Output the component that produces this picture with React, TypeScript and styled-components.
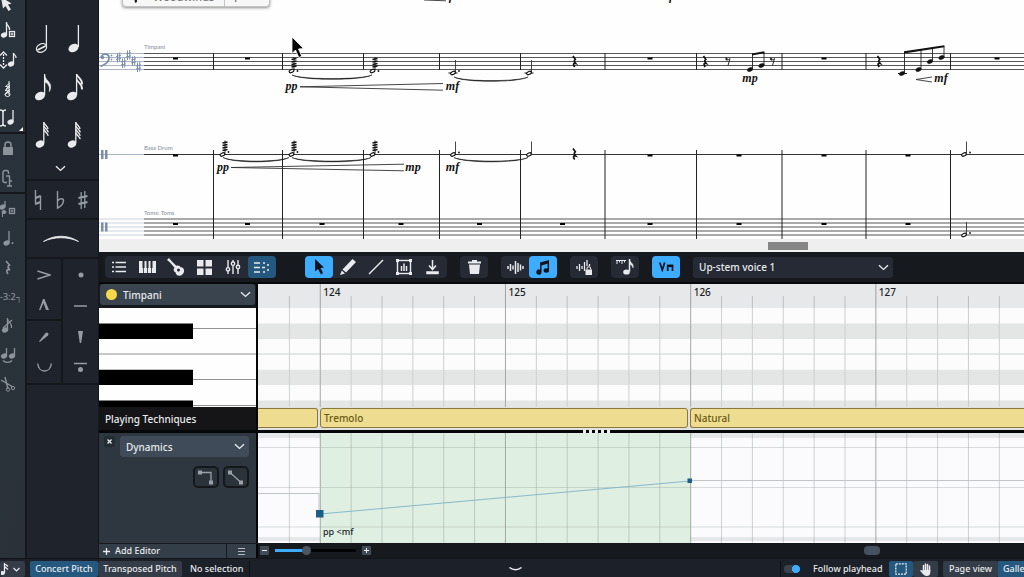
import React from "react";
import styled, { createGlobalStyle, css } from "styled-components";

const c = {
  rail: "#29313a",
  panel: "#1f232b",
  edge: "#14171c",
  bar: "#16191e",
  group: "#252a35",
  select: "#3a444f",
  accent: "#3eadff",
  deep: "#25587f",
  text: "#e8eaed",
  dim: "#8d939b",
  side: "#2e373f",
  faded: "#7b8ea8",
};

const Global = createGlobalStyle`
  *, *::before, *::after { box-sizing: border-box; }
  body { margin: 0; background: #16191e; overflow: hidden; }
  button, select, input { font: inherit; color: inherit; margin: 0; }
  button { border: 0; padding: 0; background: none; }
  svg { display: block; }
`;

const Shell = styled.div`
  height: 100vh;
  display: flex;
  flex-direction: column;
  font: 500 10px/14px "Noto Sans", "Open Sans", sans-serif;
  color: ${c.text};
  background: ${c.bar};
`;
const Workspace = styled.div`
  flex: 1;
  min-height: 0;
  display: flex;
`;

/* ---------- left tool rail ---------- */
const Rail = styled.nav`
  width: 27px;
  flex: none;
  overflow: hidden;
  background: linear-gradient(100deg, #29333b, #2a3139);
  border-right: 2px solid ${c.edge};
`;
const RailSection = styled.div<{ $top?: number }>`
  position: relative;
  padding-top: ${(p) => p.$top ?? 0}px;
  border-bottom: 2px solid ${c.edge};
  &:last-child { border-bottom: 0; }
`;
const RailButton = styled.button<{ $h?: number; $dim?: boolean }>`
  display: flex;
  align-items: center;
  width: 25px;
  height: ${(p) => p.$h ?? 29}px;
  color: ${(p) => (p.$dim ? c.dim : c.text)};
  font-size: 9px;
  white-space: nowrap;
`;
const Corner = styled.i`
  position: absolute;
  right: 2px;
  bottom: 1px;
  border: 2px solid transparent;
  border-right-color: #fff;
  border-bottom-color: #fff;
`;

/* ---------- notation palette ---------- */
const Palette = styled.aside`
  width: 72px;
  flex: none;
  background: ${c.panel};
  border-right: 1px solid ${c.edge};
`;
const NoteGrid = styled.div`
  display: grid;
  grid-template-columns: repeat(2, 32px);
  grid-auto-rows: 48px;
  padding-top: 14px;
`;
const PaletteButton = styled.button<{ $dim?: boolean; $line?: boolean }>`
  display: grid;
  place-items: center;
  color: ${(p) => (p.$dim ? "#969ca4" : c.text)};
  ${(p) => p.$line && css`border-bottom: 2px solid ${c.edge};`}
`;
const PaletteRow = styled.div<{ $h: number }>`
  display: flex;
  height: ${(p) => p.$h}px;
  padding: 0 4px 0 0;
  border-bottom: 2px solid ${c.edge};
  & > button { flex: 1; }
`;
const Articulations = styled.div`
  display: grid;
  grid-template-columns: 36px 1fr;
  grid-auto-rows: 31px;
  border-bottom: 2px solid ${c.edge};
  & > button:nth-child(odd) { border-right: 2px solid ${c.edge}; }
`;

/* ---------- main column ---------- */
const Main = styled.main`
  flex: 1;
  min-width: 0;
  display: flex;
  flex-direction: column;
`;
const ScoreView = styled.section`
  position: relative;
  flex: 1;
  min-height: 0;
  display: flex;
  flex-direction: column;
  background: #fff;
`;
const ScoreCanvas = styled.div`
  flex: 1;
  min-height: 0;
  overflow: hidden;
  background: #fefefe;
`;
const ScoreScroll = styled.div`
  height: 13px;
  padding: 3px 0 0;
  background: #efefef;
  display: flex;
  justify-content: flex-end;
`;
const ScoreThumb = styled.div`
  width: 40px;
  height: 8px;
  margin-right: 216px;
  background: #868686;
`;
const FlowTab = styled.div`
  position: absolute;
  left: 23px;
  top: -13px;
  width: 148px;
  height: 20px;
  display: flex;
  background: #f7f7f7;
  border: 1px solid #c4c4c4;
  border-radius: 4px;
  box-shadow: 0 1px 3px rgba(0, 0, 0, 0.45);
  color: #777;
  font-size: 11px;
  line-height: 20px;
`;
const FlowName = styled.span`
  display: flex;
  align-items: center;
  gap: 15px;
  width: 102px;
  padding-left: 10px;
  border-right: 1px solid #c4c4c4;
`;
const FlowNext = styled.span`
  padding-left: 9px;
`;

/* ---------- toolbar ---------- */
const Toolbar = styled.div`
  display: flex;
  align-items: center;
  gap: 13px;
  height: 32px;
  padding: 0 6px;
  background: ${c.bar};
  border-bottom: 2px solid #06080a;
`;
const Group = styled.div<{ $w: number; $after?: number }>`
  display: flex;
  width: ${(p) => p.$w}px;
  height: 22px;
  flex: none;
  border-radius: 4px;
  background: ${c.group};
  margin-right: ${(p) => p.$after ?? 0}px;
`;
const Tool = styled.button<{ $tone?: "deep" | "accent" }>`
  flex: 1;
  display: grid;
  place-items: center;
  border-radius: 4px;
  color: ${(p) => (p.$tone === "accent" ? "#10141a" : c.text)};
  background: ${(p) => (p.$tone === "accent" ? c.accent : p.$tone === "deep" ? c.deep : "none")};
`;
const SelectBox = styled.label<{ $bg: string; $w?: number }>`
  display: grid;
  grid-template-columns: 1fr auto;
  align-items: center;
  flex: ${(p) => (p.$w ? "none" : 1)};
  width: ${(p) => (p.$w ? p.$w + "px" : "auto")};
  height: 21px;
  border-radius: 3px;
  background: ${(p) => p.$bg};
  & > svg { grid-area: 1 / 2; margin-right: 4px; pointer-events: none; }
`;
const Select = styled.select<{ $indent: number }>`
  grid-area: 1 / 1 / 2 / 3;
  width: 100%;
  height: 100%;
  appearance: none;
  border: 0;
  background: none;
  padding: 0 18px 0 ${(p) => p.$indent}px;
  outline: 0;
`;
const Swatch = styled.i`
  grid-area: 1 / 1;
  width: 11px;
  height: 11px;
  margin-left: 6px;
  border-radius: 50%;
  background: #f6d84a;
  pointer-events: none;
`;

/* ---------- lower zone ---------- */
const Row = styled.div<{ $h: number }>`
  display: grid;
  grid-template-columns: 159px minmax(0, 1fr);
  height: ${(p) => p.$h}px;
  flex: none;
`;
const SideCell = styled.div<{ $bg?: string }>`
  display: flex;
  flex-direction: column;
  background: ${(p) => p.$bg ?? c.bar};
  border-right: 2px solid #050607;
  min-height: 0;
`;
const TrackCell = styled(SideCell)`
  flex-direction: row;
  align-items: flex-start;
  padding: 0 1px 0 1px;
`;
const RollCell = styled.div`
  overflow: hidden;
  background: #fbfcfb;
`;
const TechniqueTitle = styled(SideCell)`
  padding: 5px 6px;
  background: #151518;
`;
const TechniqueLane = styled.div`
  display: flex;
  gap: 2px;
  padding: 1px 0 2px;
  background: #dfe2e1;
  overflow: hidden;
`;
const Technique = styled.div<{ $w?: number; $open?: "left" | "right" }>`
  flex: ${(p) => (p.$w ? "none" : 1)};
  width: ${(p) => (p.$w ? p.$w + "px" : "auto")};
  padding: 2px 3px;
  border: 1px solid #8b793b;
  border-radius: 3px;
  ${(p) => p.$open === "left" && css`border-left: 0; border-radius: 0 3px 3px 0;`}
  ${(p) => p.$open === "right" && css`border-right: 0; border-radius: 3px 0 0 3px;`}
  background: #eedd90;
  color: #6b5a17;
`;
const Splitter = styled.div`
  display: flex;
  justify-content: center;
  gap: 3px;
  height: 3px;
  padding-left: 70px;
  background: #050607;
  & > i { width: 3px; height: 3px; background: #eee; }
`;
const LaneHead = styled.div`
  display: flex;
  align-items: flex-start;
  gap: 5px;
  padding: 3px 7px 0 5px;
`;
const CloseButton = styled.button`
  width: 11px;
  height: 11px;
  border-radius: 2px;
  display: grid;
  place-items: center;
  background: #242c33;
`;
const LaneTools = styled.div`
  display: flex;
  justify-content: flex-end;
  gap: 4px;
  padding: 9px 7px;
`;
const LaneButton = styled.button`
  width: 26px;
  height: 22px;
  display: grid;
  place-items: center;
  border: 2px solid #14181c;
  border-radius: 5px;
  background: #2a323a;
  color: #9aa0a7;
`;
const AddRow = styled.div`
  display: flex;
  gap: 1px;
  height: 14px;
  margin-top: 1px;
  line-height: 14px;
  border-right: 2px solid #050607;
`;
const AddButton = styled.button`
  flex: 1;
  display: flex;
  align-items: center;
  gap: 5px;
  padding-left: 4px;
  background: #343e48;
  font-size: 9px;
`;
const MenuButton = styled.button`
  width: 29px;
  display: grid;
  place-items: center;
  background: #343e48;
  color: #b4b9bf;
`;
const ZoomBar = styled.div`
  display: flex;
  align-items: center;
  gap: 6px;
  padding-left: 2px;
`;
const ZoomButton = styled.button`
  width: 9px;
  height: 9px;
  border-radius: 1px;
  display: grid;
  place-items: center;
  background: #414b56;
`;
const ZoomSlider = styled.input`
  appearance: none;
  width: 81px;
  height: 9px;
  background: linear-gradient(90deg, ${c.accent} 38%, #020304 38%) center / 100% 3px no-repeat;
  &::-webkit-slider-thumb {
    appearance: none;
    width: 9px;
    height: 9px;
    border-radius: 50%;
    background: #4e5660;
  }
`;
const RollThumb = styled.div`
  width: 16px;
  height: 9px;
  margin: 0 144px 0 auto;
  border-radius: 4px;
  background: #455060;
`;

/* ---------- status bar ---------- */
const Status = styled.footer`
  display: flex;
  height: 19px;
  flex: none;
  padding-top: 2px;
  background: #1c2028;
  border-top: 1px solid #101317;
  font-size: 9px;
  line-height: 16px;
`;
const Mode = styled.button<{ $on?: boolean; $w: number }>`
  width: ${(p) => p.$w}px;
  flex: none;
  display: flex;
  align-items: center;
  justify-content: center;
  white-space: nowrap;
  border-radius: 2px;
  background: ${(p) => (p.$on ? c.deep : "#343c47")};
`;
const ClippedMode = styled(Mode)`
  justify-content: flex-start;
  padding-left: 5px;
  overflow: hidden;
  border-radius: 0;
`;
const StatusText = styled.span`
  width: 68px;
  padding-left: 8px;
  border-right: 1px solid #0e1114;
`;
const Expand = styled.button`
  flex: 1;
  display: grid;
  place-items: center;
`;
const StatusPart = styled.div<{ $ml?: number }>`
  display: flex;
  margin-left: ${(p) => p.$ml ?? 0}px;
`;
const Follow = styled.label`
  display: flex;
  align-items: center;
  gap: 13px;
  width: 109px;
  padding-left: 3px;
  border-left: 1px solid #0e1114;
  white-space: nowrap;
`;
const Switch = styled.input`
  appearance: none;
  flex: none;
  width: 16px;
  height: 8px;
  border-radius: 4px;
  background: radial-gradient(circle at 12px 4px, ${c.accent} 4px, #39424d 4px);
`;

/* ---------- icons ---------- */
type IcoProps = { w: number; h: number; children: React.ReactNode; sw?: number };
const Ico = ({ w, h, children, sw = 1 }: IcoProps) => (
  <svg width={w} height={h} viewBox={`0 0 ${w} ${h}`} fill="none" stroke="currentColor" strokeWidth={sw} aria-hidden="true">
    {children}
  </svg>
);
const Chevron = () => (
  <Ico w={11} h={7} sw={1.4}><path d="M1 1.2 5.5 5.4 10 1.2" /></Ico>
);
const PaletteNote = ({ flags = 0, open }: { flags?: number; open?: boolean }) => {
  const small = flags > 2;
  const hx = flags ? 13 : 14.5;
  const sx = small ? 16.8 : flags ? 17.6 : 19.4;
  return (
    <Ico w={32} h={36}>
      <ellipse cx={hx} cy={28} rx={small ? 4.4 : 5.3} ry={small ? 3.4 : 4} transform={`rotate(-28 ${hx} 28)`} fill={open ? "none" : "currentColor"} stroke={open ? "currentColor" : "none"} strokeWidth={1.3} />
      {open && <path d={`M${hx - 4} 30 L${hx + 4} 26`} strokeWidth={1.8} />}
      <path d={`M${sx} 27V${flags ? 6 : 5}`} strokeWidth={1.3} />
      {flags === 1 && <path d={`M${sx} 7c.5 5 6.5 7 6 12 0 1.5-.4 3-1.3 4.5 1-6-1.8-8.500-4.700-9.500z`} fill="currentColor" strokeWidth={0.7} />}
      {flags > 1 &&
        Array.from({ length: flags }, (_, i) => (
          <path key={i} d={`M${sx} ${6.5 + i * (small ? 3.4 : 5)}c1 3 ${small ? "4.5 4 4.2" : "6 4.5 5.5"} ${small ? 6.5 : 10}`} strokeWidth={small ? 1.4 : 1.8} />
        ))}
    </Ico>
  );
};
const MiniNote = ({ x, y, up = 12 }: { x: number; y: number; up?: number }) => (
  <>
    <ellipse cx={x} cy={y} rx={3.2} ry={2.5} transform={`rotate(-25 ${x} ${y})`} fill="currentColor" stroke="none" />
    <path d={`M${x + 2.5} ${y}v${-up}`} strokeWidth={1.3} />
  </>
);

const railIcons = {
  pointer: <Ico w={25} h={16}><path d="M1 -3 11.500 3.500 8 4.500 11 9.500 8.500 11 5.500 6 3 8.500z" fill="currentColor" stroke="none" /></Ico>,
  addNote: <Ico w={25} h={20}><MiniNote x={4} y={14} up={13} /><path d="M6.500 2c.5 3 3.500 3 3 7" strokeWidth={1.300} /><rect x="9.500" y="10.500" width="5" height="5" strokeWidth={1.300} /><path d="M12 11.500v3M10.500 13h3" /></Ico>,
  pitch: <Ico w={25} h={20}><path d="M3.500 4v12" strokeDasharray="2 1" strokeWidth={1.300} /><path d="M0 5.500 3.500 2 7 5.500M0 14.500 3.500 18 7 14.500" strokeWidth={1.300} /><MiniNote x={11} y={14} up={11} /><path d="M13.500 3c0 2 3 2 2.500 5" strokeWidth={1.300} /></Ico>,
  roll: <Ico w={25} h={20}><path d="M9 2v14M10 4 5.500 7.500 10 8 5 11.500l5 .5-5 3.500M10 6 6 10M10 10l-4 4" /><ellipse cx="7.500" cy="15.500" rx="2.500" ry="2" /></Ico>,
  insert: <Ico w={25} h={20}><path d="M0 2c2 0 3 .5 3 2v12c0 1.500-1 2-3 2M6 2c-2 0-3 .5-3 2M6 18c-2 0-3-.5-3-2" strokeWidth={1.500} /><MiniNote x={10.500} y={14} /></Ico>,
  lock: <Ico w={25} h={16}><rect x="3" y="6" width="10" height="8" rx="0.500" fill="currentColor" stroke="none" /><path d="M5 7V4a3 3 0 0 1 6 0V7" strokeWidth={1.500} /></Ico>,
  clip: <Ico w={25} h={20}><path d="M8.500 6V4.500a2 2 0 0 0-2-2H5a2 2 0 0 0-2 2v8a2 2 0 0 0 2 2h2M9.500 8v10M6 8h4M7 18h5M9 13h3" strokeWidth={1.400} /></Ico>,
  graceAdd: <Ico w={25} h={20}><MiniNote x={2.500} y={7} up={6} /><path d="M2.500 11v6" /><ellipse cx="4" cy="12" rx="2" ry="1.500" fill="currentColor" /><rect x="9.500" y="8.500" width="5" height="5" strokeWidth={1.300} /><path d="M12 9.500v3M10.500 11h3" /></Ico>,
  dotted: <Ico w={25} h={20}><MiniNote x={6.500} y={14} up={12} /><circle cx="12.500" cy="14" r="1" fill="currentColor" stroke="none" /></Ico>,
  rest: <Ico w={25} h={20}><path d="M6 3l3.500 4c-2 1.500-2 2.500.5 5-3-1-4.500 1-2 4" strokeWidth={1.700} /></Ico>,
  grace: <Ico w={25} h={20}><MiniNote x={5} y={14} /><path d="M7.500 3c.5 3 5 4 4 9M3 12l9-8" strokeWidth={1.200} /></Ico>,
  tie: <Ico w={25} h={20}><MiniNote x={4} y={11} up={8} /><MiniNote x={12} y={11} up={8} /><path d="M3 15.500c2 2.500 7 2.500 9 0" strokeWidth={1.300} /></Ico>,
  cut: <Ico w={25} h={20}><path d="M1 6l12 7M5 3l3 12" strokeWidth={1.400} /><circle cx="8" cy="15.500" r="1.700" /><circle cx="13" cy="14" r="1.700" /></Ico>,
};

const toolIcons = {
  list: <Ico w={16} h={14} sw={1.5}><path d="M4.500 2.500H15M4.500 7H15M4.500 11.500H15M1 2.500h2M1 7h2M1 11.500h2" /></Ico>,
  piano: <Ico w={17} h={14}><path d="M0 1h17v12H0z" fill="currentColor" stroke="none" /><path d="M4.500 1v7M8.500 1v7M12.500 1v7" stroke={c.group} strokeWidth={2} /><path d="M4.500 8v5M8.500 8v5M12.500 8v5" stroke={c.group} strokeWidth={0.800} /></Ico>,
  guitar: <Ico w={20} h={20}><path d="M1 3 3 1l2.500 3 4.800 4.800c2-.8 3.700 0 4.200 1.500 2.500 0 4 2 3.500 4.500-.5 2-2 3.500-4 4-2.500.3-4.500-1.500-4.500-3.500-2-.5-2.500-2.800-1-4.500L4 5.500z" fill="currentColor" stroke="none" /><circle cx="12.500" cy="13" r="1.500" fill={c.group} stroke="none" /></Ico>,
  grid: <Ico w={15} h={15}><path d="M0 0h6.500v6.500H0zM8.500 0H15v6.500H8.500zM0 8.500h6.500V15H0zM8.500 8.500H15V15H8.500z" fill="currentColor" stroke="none" /></Ico>,
  mixer: <Ico w={16} h={16} sw={1.4}><path d="M3 1v7.500M3 12v3M8 1v2M8 6.500V15M13 1v5M13 10v5" /><circle cx="3" cy="10.300" r="1.700" /><circle cx="8" cy="4.700" r="1.700" /><circle cx="13" cy="8" r="1.700" /></Ico>,
  keyEditor: <Ico w={16} h={13} sw={1.5}><path d="M0 2h6M0 6.500h6M0 11h6M9 2h2M13 4h2M8 6.500h3M9 11h2M13 9h2" /></Ico>,
  arrow: <Ico w={12} h={16}><path d="M2 0 11 8.500 7.500 9l2.500 5-2 1.500-3-5.500-3 2.500z" fill="currentColor" stroke="none" /></Ico>,
  pencil: <Ico w={16} h={16}><path d="M12.500 0 16 3 6 13.500l-3.500-3zM1.800 11.500 5 14.500 0 16z" fill="currentColor" stroke="none" /></Ico>,
  line: <Ico w={16} h={16} sw={1.4}><path d="M1 15 15 1" /></Ico>,
  histogram: <Ico w={16} h={16}><rect x="1.500" y="1.500" width="13" height="13" strokeWidth={1.400} /><path d="M5.500 12V7M8 12V4.500M10.500 12V7" strokeWidth={1.500} /><path d="M0 0h3v3H0zM13 0h3v3h-3zM0 13h3v3H0zM13 13h3v3h-3z" fill="currentColor" stroke="none" /></Ico>,
  quantize: <Ico w={13} h={15} sw={1.5}><path d="M6.500 0v9M3 5.500l3.500 4 3.500-4" /><path d="M.5 11.500h12v2.500H.5z" fill="currentColor" strokeWidth={0.500} /></Ico>,
  trash: <Ico w={13} h={14}><path d="M0 1.500h4V0h5v1.500h4V3.500H0zM1 4.500h11L11 14H2z" fill="currentColor" stroke="none" /></Ico>,
  wave: <Ico w={17} h={15} sw={1.5}><path d="M1 6v3M3.500 4v7M6 5.500v4M8.500 1v13M11 3v9M13.500 4.500v6M16 6v3" /></Ico>,
  beamed: <Ico w={14} h={15}><path d="M4 2.500 13 0v3.200L5.500 5.400V12a2.600 2.600 0 1 1-1.500-2.300z" fill="currentColor" stroke="none" /><path d="M12.300 2v8.500" strokeWidth={1.500} /><ellipse cx="10.300" cy="10.500" rx="2.700" ry="2.200" fill="currentColor" stroke="none" /></Ico>,
  waveLock: <Ico w={17} h={15} sw={1.3}><path d="M1 6v3M3.500 4v7M6 6v3M8.500 2v9M11 0v6M13.500 4v2" /><rect x="9.500" y="9.500" width="6.500" height="5.500" fill="currentColor" stroke="none" /><path d="M11 9.500V8.500a1.800 1.800 0 0 1 3.600 0v1" strokeWidth={1.100} /></Ico>,
  ruler: <Ico w={19} h={17}><path d="M0 1.500h10M1 1v4M3.500 1v2.500M6 1v4M8.500 1v2.500" /><path d="M13.500 0v12.500" strokeWidth={1.500} /><ellipse cx="10.500" cy="13" rx="3.300" ry="2.600" fill="currentColor" stroke="none" /><path d="M13.500 0c0 4 5 4 3.500 9-.3-3-3.500-4-3.500-4z" fill="currentColor" strokeWidth={0.500} /></Ico>,
  bowing: <Ico w={15} h={10} sw={1.7}><path d="M.8.5 3.300 8 5.700.5M8.700 9V3.500M13.500 9V3.500" /><path d="M8 3.800h6.300" strokeWidth={2.500} /></Ico>,
};

/* ---------- score drawing ---------- */
const barX = [213.5, 282.5, 363.5, 439.5, 520.5, 605, 696.5, 782, 866, 950.5];
const Notehead = ({ x, y, open }: { x: number; y: number; open?: boolean }) => (
  <ellipse cx={x} cy={y} rx={open ? 2.5 : 3} ry={open ? 1.5 : 2} transform={`rotate(-25 ${x} ${y})`} fill={open ? "#fff" : "#111"} stroke="#111" strokeWidth={open ? 1.1 : 0.2} />
);
const HalfNote = ({ x, y, dot, ledger }: { x: number; y: number; dot?: boolean; ledger?: boolean }) => (
  <g>
    <path d={`M${x + 2.5} ${y - 1}V${y - 13}`} stroke="#333" strokeWidth={0.9} />
    {ledger && <path d={`M${x - 4.5} ${y}h9`} stroke="#111" />}
    <Notehead x={x} y={y} open />
    {dot && <circle cx={x + 6} cy={y - 2} r={0.9} fill="#111" />}
  </g>
);
const Tremolo = ({ x, y, dotY }: { x: number; y: number; dotY: number }) => (
  <g>
    <path d={`M${x + 2.5} ${y - 1}V${y - 14}`} stroke="#222" strokeWidth={0.9} />
    {[0, 1, 2, 3].map((i) => (
      <path key={i} d={`M${x} ${y - 11.5 + i * 2.5}l5-1`} stroke="#111" strokeWidth={1.7} />
    ))}
    <Notehead x={x} y={y} open />
    <circle cx={x + 6} cy={dotY} r={0.9} fill="#111" />
  </g>
);
const QuarterRest = ({ x, y }: { x: number; y: number }) => (
  <path d={`M${x - 1.5} ${y - 5.5}l2.300 3.300c-1.500 1.200-1.300 2.200.4 4.200-2.400-.7-3 .8-1 3.500`} fill="none" stroke="#111" strokeWidth={1.7} />
);
const EighthRest = ({ x, y }: { x: number; y: number }) => (
  <g stroke="#111" fill="none" strokeWidth={0.9}>
    <circle cx={x - 1.5} cy={y - 2.5} r={0.8} fill="#111" />
    <path d={`M${x - 1.5} ${y - 1.5}c1.500 0 2.500-.5 3.500-1.500l-2 7`} />
  </g>
);
const Slur = ({ x1, x2, y }: { x1: number; x2: number; y: number }) => (
  <path d={`M${x1} ${y}c10 4.800 ${x2 - x1 - 10} 4.800 ${x2 - x1} 0c-10 5.800 ${10 - x2 + x1} 5.800 ${x1 - x2} 0z`} fill="#111" stroke="#111" strokeWidth={0.5} />
);
const Dyn = ({ x, y, children }: { x: number; y: number; children: string }) => (
  <text x={x} y={y} textAnchor="middle" fontFamily="'Liberation Serif', serif" fontStyle="italic" fontWeight={700} fontSize={12} fill="#111">{children}</text>
);
const Sharp = ({ x, y }: { x: number; y: number }) => (
  <path d={`M${x - 1} ${y - 4.5}v9.500M${x + 1.2} ${y - 5}v9.500M${x - 2.5} ${y - 1}l5-1.200M${x - 2.5} ${y + 2}l5-1.200`} stroke={c.faded} strokeWidth={1} fill="none" />
);
const BarRests = ({ xs, y }: { xs: number[]; y: number }) => (
  <>{xs.map((x) => <rect key={x} x={x - 2.5} y={y} width={5} height={2} fill="#000" />)}</>
);
const StaffName = ({ y, children }: { y: number; children: string }) => (
  <text x={144} y={y} fontFamily="Lato, sans-serif" fontSize={6} fill="#8c95a2">{children}</text>
);

const Score = () => (
  <svg width="1400" height="239" viewBox="99 0 1400 239" aria-label="Score">
    {[53.5, 57.5, 61.5, 65.5, 69.5].map((y) => (
      <g key={y}>
        <path d={`M99 ${y}H144`} stroke="#a9b4c5" />
        <path d={`M144 ${y}H1500`} stroke="#444" strokeWidth={0.9} />
      </g>
    ))}
    <path d="M99 154.500H144" stroke="#a9b4c5" />
    <path d="M144 154.500H1500" stroke="#333" />
    {[219, 223, 227, 231, 235].map((y) => (
      <g key={y}>
        <path d={`M99 ${y}H144`} stroke="#ccd3de" strokeWidth={1.2} />
        <path d={`M144 ${y}H1500`} stroke="#555" strokeWidth={1.2} />
      </g>
    ))}
    {barX.map((x) => (
      <path key={x} d={`M${x} 53V70M${x} 150V239`} stroke="#222" />
    ))}
    <StaffName y={49}>Timpani</StaffName>
    <StaffName y={150}>Bass Drum</StaffName>
    <StaffName y={215}>Toms: Toms</StaffName>

    <path d="M101 57.500c0-4 8.500-5 8 .5 0 4-3.500 6.500-8.500 8.500" fill="none" stroke={c.faded} strokeWidth={1.8} />
    <circle cx="102.500" cy="57.500" r="1.700" fill={c.faded} />
    <circle cx="111.500" cy="55.500" r="0.900" fill={c.faded} />
    <circle cx="111.500" cy="59.500" r="0.900" fill={c.faded} />
    {[[118.5, 57.5], [123.5, 63], [128.5, 55], [133.5, 61], [138.5, 67]].map(([x, y]) => <Sharp key={x} x={x} y={y} />)}
    <path d="M101 150h2.500v9H101zM105 150h2.500v9H105zM101 222.500h2.500v9H101zM105 222.500h2.500v9H105z" fill={c.faded} />

    <BarRests xs={[175.5, 247.5, 650, 824, 997]} y={57.5} />
    <BarRests xs={[175.5, 650, 739, 824, 908]} y={154.5} />
    <BarRests xs={[175.5, 247.5, 322, 401, 479.5, 562.5, 650, 739, 824, 908]} y={223} />

    <path d="M424 0 446 .8" stroke="#333" strokeWidth={0.9} />
    <Dyn x={446} y={0}>mf</Dyn>
    <Dyn x={671} y={0}>f</Dyn>

    <Tremolo x={291.5} y={71} dotY={71} />
    <Tremolo x={372.5} y={71} dotY={71} />
    <Slur x1={292} x2={372} y={75} />
    <Dyn x={291.5} y={90}>pp</Dyn>
    <path d="M443 83.500 300 86.800 443 90.200" fill="none" stroke="#333" strokeWidth={0.9} />
    <Dyn x={452.5} y={90}>mf</Dyn>
    <HalfNote x={453} y={73} dot ledger />
    <HalfNote x={529} y={73} ledger />
    <Slur x1={454} x2={528} y={77} />
    <QuarterRest x={574.5} y={61.5} />

    <QuarterRest x={705} y={61.5} />
    <EighthRest x={728} y={61.5} />
    <Notehead x={750} y={69.5} />
    <Notehead x={761.5} y={65.5} />
    <path d="M752.500 69V54M764 65V52" stroke="#222" strokeWidth={0.9} />
    <path d="M752 53.500 764.300 51.200v2L752 55.500z" fill="#111" />
    <EighthRest x={772.5} y={61.5} />
    <Dyn x={750} y={82}>mp</Dyn>

    <QuarterRest x={879} y={61.5} />
    <path d="M898 73.500h9" stroke="#111" />
    <Notehead x={902} y={73.5} />
    <Notehead x={918.5} y={69.5} />
    <Notehead x={930} y={61.5} />
    <Notehead x={941.5} y={57.5} />
    <path d="M904.500 73V52M921 69V50M932.500 61V48M944 57V46" stroke="#222" strokeWidth={0.9} />
    <path d="M904 51.300 944.300 45.300v2L904 53.500z" fill="#111" />
    <path d="M932 77 916 79.500 932 82" fill="none" stroke="#333" strokeWidth={0.9} />
    <Dyn x={941} y={82}>mf</Dyn>

    <Tremolo x={222.5} y={154.5} dotY={152} />
    <Tremolo x={291.5} y={154.5} dotY={152} />
    <Tremolo x={372.5} y={154.5} dotY={152} />
    <Slur x1={223} x2={289} y={157.5} />
    <Slur x1={292} x2={371} y={157.5} />
    <Dyn x={223} y={171}>pp</Dyn>
    <path d="M404 164.200 231 167.500 404 170.800" fill="none" stroke="#333" strokeWidth={0.9} />
    <Dyn x={413} y={171}>mp</Dyn>
    <Dyn x={452.5} y={171}>mf</Dyn>
    <HalfNote x={453} y={154.5} dot />
    <HalfNote x={529} y={154.5} />
    <Slur x1={454} x2={528} y={157.5} />
    <QuarterRest x={574.5} y={154} />
    <HalfNote x={964} y={154.5} dot />
    <HalfNote x={964} y={235} dot />

    <path d="M292 37v16.500l3.500-3.500 3.300 7.500 3-1.300-3.300-7.200 5-.5z" fill="#000" stroke="#fff" strokeWidth={0.8} />
  </svg>
);

/* ---------- piano roll ---------- */
const beat = 185.2 / 6;
const beats = Array.from({ length: 45 }, (_, i) => ({ x: 289.4 + i * beat, bar: i % 6 === 1, n: 124 + Math.floor(i / 6) }));

const Ruler = () => (
  <svg width="1400" height="24" viewBox="258 284 1400 24" aria-label="Bars">
    <path d="M258 284h1400v24H258z" fill="#e7e8ea" />
    {beats.map((b) => (
      <path key={b.x} d={`M${b.x} ${b.bar ? 284 : 296}V308`} stroke={b.bar ? "#9fa1a4" : "#bcbec0"} />
    ))}
    {beats.filter((b) => b.bar).map((b) => (
      <text key={b.n} x={b.x + 3} y={296} fontSize={10} fill="#1c1f24">{b.n}</text>
    ))}
  </svg>
);
const Keys = () => (
  <svg width="157" height="99" viewBox="99 308 157 99" aria-label="Keyboard">
    <path d="M99 308h157v99H99z" fill="#fdfefd" />
    <path d="M193 328.500h63M99 354h157M193 379.500h63M193 405.500h63" stroke="#909291" />
    <path d="M99 323.500h94v15.500H99zM99 369.800h94V385H99zM99 400.500h94v6.500H99z" fill="#000" />
  </svg>
);
const Roll = () => (
  <svg width="1400" height="99" viewBox="258 308 1400 99" aria-label="Piano roll">
    <path d="M258 323.500h1400V339H258zM258 369.800h1400V385H258zM258 400.500h1400v6.500H258z" fill="#e3e6e5" />
    <path d="M258 354h1400" stroke="#cfd2d1" />
    {beats.map((b) => (
      <path key={b.x} d={`M${b.x} 308V407`} stroke={b.bar ? "#a6a9a8" : "#cdd0cf"} />
    ))}
  </svg>
);
const DynamicsGraph = () => (
  <svg width="1400" height="110" viewBox="258 433 1400 110" aria-label="Dynamics automation">
    <path d="M258 433h1400v110H258z" fill="#fbfbfd" />
    <path d="M258 433h1400v5H258zM258 537h1400v4H258z" fill="#e6e7e8" />
    <path d="M320 433h370v110H320z" fill="#dfefe1" />
    {beats.map((b) => (
      <path key={b.x} d={`M${b.x} 433V543`} stroke={b.bar ? "#a4aaa7" : "#8c9690"} strokeOpacity={b.bar ? 1 : 0.4} />
    ))}
    <path d="M258 447.500h1400M258 487.500h1400M258 527h1400" stroke="#8c9690" strokeOpacity={0.3} />
    <path d="M258 493.500h61V514M690 480.500h968" stroke="#c2c5c8" fill="none" />
    <path d="M320 514 690 481" stroke="#7db3c8" strokeWidth={0.9} />
    <path d="M316 510h7.500v7.500H316zM687.500 478.500h4.500v4.500h-4.500z" fill="#1e5d85" />
    <text x={323} y={535} fontSize={9} fill="#20242a">pp &lt;mf</text>
  </svg>
);

export default function App() {
  return (
    <Shell>
      <Global />
      <Workspace>
        <Rail aria-label="Note input">
          <RailSection>
            <RailButton $h={16} aria-label="Select">{railIcons.pointer}</RailButton>
            <RailButton aria-label="Start note input">{railIcons.addNote}</RailButton>
            <RailButton aria-label="Pitch before duration">{railIcons.pitch}</RailButton>
            <RailButton aria-label="Chords">{railIcons.roll}</RailButton>
            <RailButton aria-label="Insert">{railIcons.insert}</RailButton>
            <Corner />
          </RailSection>
          <RailSection>
            <RailButton $dim aria-label="Lock duration">{railIcons.lock}</RailButton>
            <RailButton $dim aria-label="Force duration">{railIcons.clip}</RailButton>
          </RailSection>
          <RailSection $top={1}>
            <RailButton $dim aria-label="Add grace">{railIcons.graceAdd}</RailButton>
            <RailButton $dim aria-label="Dotted">{railIcons.dotted}</RailButton>
            <RailButton $dim aria-label="Rest">{railIcons.rest}</RailButton>
            <RailButton $dim>-3:2┐</RailButton>
            <RailButton $dim aria-label="Grace notes">{railIcons.grace}</RailButton>
            <RailButton $dim aria-label="Tie">{railIcons.tie}</RailButton>
            <RailButton $dim aria-label="Scissors">{railIcons.cut}</RailButton>
          </RailSection>
        </Rail>

        <Palette aria-label="Notes">
          <NoteGrid>
            <PaletteButton aria-label="Half note"><PaletteNote open /></PaletteButton>
            <PaletteButton aria-label="Quarter note"><PaletteNote /></PaletteButton>
            <PaletteButton aria-label="Eighth note"><PaletteNote flags={1} /></PaletteButton>
            <PaletteButton aria-label="16th note"><PaletteNote flags={2} /></PaletteButton>
            <PaletteButton aria-label="32nd note"><PaletteNote flags={3} /></PaletteButton>
            <PaletteButton aria-label="64th note"><PaletteNote flags={4} /></PaletteButton>
          </NoteGrid>
          <PaletteRow $h={23}>
            <PaletteButton aria-label="More notes"><Chevron /></PaletteButton>
          </PaletteRow>
          <PaletteRow $h={39}>
            <PaletteButton $dim aria-label="Natural"><Ico w={8} h={22} sw={1.4}><path d="M1.500 1v14.500M6.500 21V6.500" /><path d="M1.500 9l5-2M1.500 15l5-2" strokeWidth={2.200} /></Ico></PaletteButton>
            <PaletteButton $dim aria-label="Flat"><Ico w={9} h={20} sw={1.4}><path d="M1.500 1v17c4-2 6-5 6-7.500s-4-2.500-6 .5" /></Ico></PaletteButton>
            <PaletteButton $dim aria-label="Sharp"><Ico w={10} h={20} sw={1.3}><path d="M3.200 2v17M6.800 1v17" /><path d="M.5 8l9-2M.5 14l9-2" strokeWidth={2} /></Ico></PaletteButton>
          </PaletteRow>
          <PaletteRow $h={39}>
            <PaletteButton aria-label="Slur"><Ico w={36} h={8}><path d="M.5 6.500C11-.5 25-.5 35.500 6.500 25 1.500 11 1.500 .5 6.500z" fill="currentColor" strokeWidth={0.8} /></Ico></PaletteButton>
          </PaletteRow>
          <Articulations>
            <PaletteButton $dim aria-label="Accent"><Ico w={14} h={10} sw={1.5}><path d="M.5 1 13 5 .5 9" /></Ico></PaletteButton>
            <PaletteButton $dim aria-label="Staccato"><Ico w={6} h={6}><circle cx="3" cy="3" r="2.500" fill="currentColor" stroke="none" /></Ico></PaletteButton>
            <PaletteButton $dim $line aria-label="Marcato"><Ico w={10} h={11}><path d="M0 11 4 0h1.500L10 11H7L4.500 4 1.500 11z" fill="currentColor" stroke="none" /></Ico></PaletteButton>
            <PaletteButton $dim aria-label="Tenuto"><Ico w={13} h={2} sw={1.5}><path d="M0 1h13" /></Ico></PaletteButton>
            <PaletteButton $dim aria-label="Stress"><Ico w={10} h={10}><path d="M0 9.500 6.500 1C8-.5 10.500 1.500 9 3.500L.8 10z" fill="currentColor" stroke="none" /></Ico></PaletteButton>
            <PaletteButton $dim aria-label="Staccatissimo"><Ico w={5} h={12}><path d="M0 0h5L3.200 12H1.800z" fill="currentColor" stroke="none" /></Ico></PaletteButton>
            <PaletteButton $dim aria-label="Unstress"><Ico w={15} h={9} sw={1.4}><path d="M.7.500C1.500 10.500 13.500 10.500 14.300.500" /></Ico></PaletteButton>
            <PaletteButton $dim aria-label="Louré"><Ico w={13} h={11}><path d="M0 1.500h13" strokeWidth={1.5} /><circle cx="6.500" cy="7.500" r="2.500" fill="currentColor" stroke="none" /></Ico></PaletteButton>
          </Articulations>
        </Palette>

        <Main>
          <ScoreView>
            <ScoreCanvas><Score /></ScoreCanvas>
            <FlowTab>
              <FlowName>
                <Ico w={5} h={12}><path d="M0 0h4v11L2 12z" fill="#222" stroke="none" /></Ico>
                Woodwinds
              </FlowName>
              <FlowNext>F</FlowNext>
            </FlowTab>
            <ScoreScroll><ScoreThumb /></ScoreScroll>
          </ScoreView>

          <Toolbar role="toolbar">
            <Group $w={171} $after={16}>
              <Tool aria-label="Properties">{toolIcons.list}</Tool>
              <Tool aria-label="Keyboard">{toolIcons.piano}</Tool>
              <Tool aria-label="Fretboard">{toolIcons.guitar}</Tool>
              <Tool aria-label="Drum pads">{toolIcons.grid}</Tool>
              <Tool aria-label="Mixer">{toolIcons.mixer}</Tool>
              <Tool $tone="deep" aria-label="Key editor">{toolIcons.keyEditor}</Tool>
            </Group>
            <Group $w={142}>
              <Tool $tone="accent" aria-label="Select">{toolIcons.arrow}</Tool>
              <Tool aria-label="Draw">{toolIcons.pencil}</Tool>
              <Tool aria-label="Line">{toolIcons.line}</Tool>
              <Tool aria-label="Transform">{toolIcons.histogram}</Tool>
              <Tool aria-label="Snap">{toolIcons.quantize}</Tool>
            </Group>
            <Group $w={28}><Tool aria-label="Delete">{toolIcons.trash}</Tool></Group>
            <Group $w={56}>
              <Tool aria-label="Played durations">{toolIcons.wave}</Tool>
              <Tool $tone="accent" aria-label="Notated durations">{toolIcons.beamed}</Tool>
            </Group>
            <Group $w={28}><Tool aria-label="Lock played durations">{toolIcons.waveLock}</Tool></Group>
            <Group $w={28}><Tool aria-label="Follow rhythm">{toolIcons.ruler}</Tool></Group>
            <Group $w={28}><Tool $tone="accent" aria-label="Playing techniques">{toolIcons.bowing}</Tool></Group>
            <SelectBox $bg={c.group} $w={200}>
              <Select $indent={6} aria-label="Voice"><option>Up-stem voice 1</option></Select>
              <Chevron />
            </SelectBox>
          </Toolbar>

          <Row $h={24}>
            <TrackCell>
              <SelectBox $bg={c.select}>
                <Swatch />
                <Select $indent={23} aria-label="Instrument"><option>Timpani</option></Select>
                <Chevron />
              </SelectBox>
            </TrackCell>
            <RollCell><Ruler /></RollCell>
          </Row>
          <Row $h={99}>
            <SideCell><Keys /></SideCell>
            <RollCell><Roll /></RollCell>
          </Row>
          <Row $h={23}>
            <TechniqueTitle>Playing Techniques</TechniqueTitle>
            <TechniqueLane>
              <Technique $w={60} $open="left" />
              <Technique $w={368}>Tremolo</Technique>
              <Technique $open="right">Natural</Technique>
            </TechniqueLane>
          </Row>
          <Splitter><i /><i /><i /><i /><i /></Splitter>
          <Row $h={110}>
            <SideCell $bg={c.side}>
              <LaneHead>
                <CloseButton aria-label="Close editor"><Ico w={5} h={5} sw={1.3}><path d="M.5.500l4 4M4.500.500l-4 4" /></Ico></CloseButton>
                <SelectBox $bg="#3f4b58">
                  <Select $indent={6} aria-label="Editor"><option>Dynamics</option></Select>
                  <Chevron />
                </SelectBox>
              </LaneHead>
              <LaneTools>
                <LaneButton aria-label="Constant"><Ico w={16} h={15} sw={1.3}><path d="M3 2.500h10V13" /><path d="M0 .5h4v4H0zM11 10.500h4v4h-4z" fill="currentColor" stroke="none" /></Ico></LaneButton>
                <LaneButton aria-label="Linear"><Ico w={16} h={15} sw={1.3}><path d="M2 2.500 13 12.500" /><path d="M0 .5h4v4H0zM11 10.500h4v4h-4z" fill="currentColor" stroke="none" /></Ico></LaneButton>
              </LaneTools>
            </SideCell>
            <RollCell><DynamicsGraph /></RollCell>
          </Row>
          <Row $h={15}>
            <AddRow>
              <AddButton><Ico w={7} h={7} sw={1.3}><path d="M3.500 0v7M0 3.500h7" /></Ico>Add Editor</AddButton>
              <MenuButton aria-label="Editor menu"><Ico w={7} h={7}><path d="M0 .5h7M0 3.500h7M0 6.500h7" /></Ico></MenuButton>
            </AddRow>
            <ZoomBar>
              <ZoomButton aria-label="Zoom out"><Ico w={5} h={5}><path d="M0 2.500h5" /></Ico></ZoomButton>
              <ZoomSlider type="range" min={0} max={100} defaultValue={37} aria-label="Zoom" />
              <ZoomButton aria-label="Zoom in"><Ico w={5} h={5}><path d="M0 2.500h5M2.500 0v5" /></Ico></ZoomButton>
              <RollThumb />
            </ZoomBar>
          </Row>
        </Main>
      </Workspace>

      <Status>
        <Mode $w={25} aria-label="Rhythmic grid">
          <Ico w={24} h={14}><path d="M3.500 1v10M3.500 1.500l3.500 3M3.500 4.500l3.500 3" strokeWidth={1.3} /><ellipse cx="1.500" cy="11" rx="2.500" ry="2" fill="currentColor" stroke="none" /><path d="M12.500 6l3 3 3-3" strokeWidth={1.2} /></Ico>
        </Mode>
        <StatusPart $ml={5}>
          <Mode $w={68} $on>Concert Pitch</Mode>
          <Mode $w={84}>Transposed Pitch</Mode>
        </StatusPart>
        <StatusText>No selection</StatusText>
        <Expand aria-label="Hide lower zone"><Ico w={13} h={4} sw={1.5}><path d="M.5.500C4 3.500 9 3.500 12.500.500" /></Ico></Expand>
        <Follow>
          <Switch type="checkbox" defaultChecked />
          Follow playhead
        </Follow>
        <StatusPart>
          <Mode $w={24} $on aria-label="Marquee select"><Ico w={12} h={12}><rect x=".8" y=".8" width="10.400" height="10.400" strokeDasharray="2 1" strokeWidth={1.3} /></Ico></Mode>
          <Mode $w={25} aria-label="Hand tool"><Ico w={12} h={13}><path d="M3.500 8V2.500M5.500 7V1M7.500 7V1.500M9.500 8V3" strokeWidth={1.5} strokeLinecap="round" /><path d="M2.800 7h7.500v2.500c0 2-1.300 3.500-3.500 3.500-2.500 0-3.500-1.500-6.500-5C0 6.500 1.500 6.500 2.800 8z" fill="currentColor" stroke="none" /></Ico></Mode>
        </StatusPart>
        <StatusPart $ml={5}>
          <Mode $w={55}>Page view</Mode>
          <ClippedMode $w={26} $on>Galley view</ClippedMode>
        </StatusPart>
      </Status>
    </Shell>
  );
}
